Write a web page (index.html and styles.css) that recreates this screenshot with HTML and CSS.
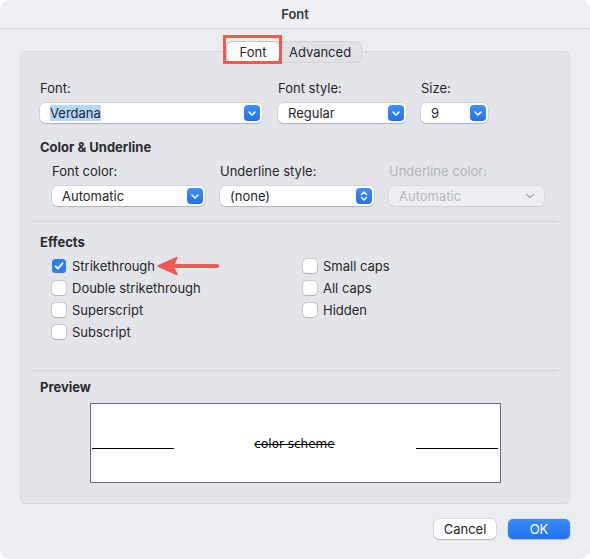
FILE: index.html
```html
<!DOCTYPE html>
<html lang="en">
<head>
    <meta charset="utf-8">
    <title>Font</title>
    <link rel="stylesheet" href="styles.css">
</head>
<body>
    <div class="window">
        <div class="titlebar">Font</div>

        <div class="tabs">
            <span class="tab active">Font</span>
            <span class="tab">Advanced</span>
        </div>

        <div class="group">
            <div class="row top-row">
                <div class="field w-font">
                    <label>Font:</label>
                    <div class="select">
                        <span class="value"><span class="hilite">Verdana</span></span>
                        <span class="btn"><svg width="16" height="16" viewBox="0 0 16 16"><path d="M5 7l3 3 3-3" fill="none" stroke="#fff" stroke-width="1.6" stroke-linecap="round" stroke-linejoin="round"/></svg></span>
                    </div>
                </div>
                <div class="field w-style">
                    <label>Font style:</label>
                    <div class="select">
                        <span class="value">Regular</span>
                        <span class="btn"><svg width="16" height="16" viewBox="0 0 16 16"><path d="M5 7l3 3 3-3" fill="none" stroke="#fff" stroke-width="1.6" stroke-linecap="round" stroke-linejoin="round"/></svg></span>
                    </div>
                </div>
                <div class="field w-size">
                    <label>Size:</label>
                    <div class="select">
                        <span class="value">9</span>
                        <span class="btn"><svg width="16" height="16" viewBox="0 0 16 16"><path d="M5 7l3 3 3-3" fill="none" stroke="#fff" stroke-width="1.6" stroke-linecap="round" stroke-linejoin="round"/></svg></span>
                    </div>
                </div>
            </div>

            <h3 class="heading h-color">Color &amp; Underline</h3>
            <div class="row sub-row">
                <div class="field w-third">
                    <label>Font color:</label>
                    <div class="select">
                        <span class="value">Automatic</span>
                        <span class="btn"><svg width="16" height="16" viewBox="0 0 16 16"><path d="M5 7l3 3 3-3" fill="none" stroke="#fff" stroke-width="1.6" stroke-linecap="round" stroke-linejoin="round"/></svg></span>
                    </div>
                </div>
                <div class="field w-third">
                    <label>Underline style:</label>
                    <div class="select">
                        <span class="value">(none)</span>
                        <span class="btn"><svg width="16" height="16" viewBox="0 0 16 16"><path d="M5.5 6.5L8 4l2.5 2.5M5.5 9.5L8 12l2.5-2.5" fill="none" stroke="#fff" stroke-width="1.5" stroke-linecap="round" stroke-linejoin="round"/></svg></span>
                    </div>
                </div>
                <div class="field w-third disabled">
                    <label>Underline color:</label>
                    <div class="select">
                        <span class="value">Automatic</span>
                        <span class="btn"><svg width="16" height="16" viewBox="0 0 16 16"><path d="M4.5 6.5L8 9.5l3.5-3" fill="none" stroke="#a8a8ad" stroke-width="1.3" stroke-linecap="round" stroke-linejoin="round"/></svg></span>
                    </div>
                </div>
            </div>

            <hr class="sep sep-1">

            <h3 class="heading h-effects">Effects</h3>
            <div class="effects">
                <div class="col">
                    <div class="check-row"><span class="box checked"><svg width="14" height="14" viewBox="0 0 14 14"><path d="M3.6 7.3l2.3 2.4 4.6-5.4" fill="none" stroke="#fff" stroke-width="1.8" stroke-linecap="round" stroke-linejoin="round"/></svg></span>Strikethrough</div>
                    <div class="check-row"><span class="box"></span>Double strikethrough</div>
                    <div class="check-row"><span class="box"></span>Superscript</div>
                    <div class="check-row"><span class="box"></span>Subscript</div>
                </div>
                <div class="col">
                    <div class="check-row"><span class="box"></span>Small caps</div>
                    <div class="check-row"><span class="box"></span>All caps</div>
                    <div class="check-row"><span class="box"></span>Hidden</div>
                </div>
                <!-- annotation arrow -->
                <svg class="arrow" width="66" height="22" viewBox="0 0 66 22">
                    <line x1="16" y1="11" x2="61" y2="11" stroke="#ee5a50" stroke-width="4" stroke-linecap="round"/>
                    <path d="M2 11L21 2.5L17 11L21 19.5Z" fill="#ee5a50" stroke="#ee5a50" stroke-width="1.5" stroke-linejoin="round"/>
                </svg>
            </div>

            <hr class="sep sep-2">

            <h3 class="heading h-preview">Preview</h3>
            <div class="preview">
                <span class="rule"></span>
                <span class="sample">color scheme</span>
                <span class="rule"></span>
            </div>
        </div>

        <div class="buttons">
            <button class="btn-push">Cancel</button>
            <button class="btn-push primary">OK</button>
        </div>
    </div>
</body>
</html>
```

FILE: styles.css
```css
body {
    margin: 0;
    background-color: #fff;
    font-family: Inter, "Liberation Sans", sans-serif;
    font-size: 13px;
    color: #262626;
}

.window {
    width: 590px;
    height: 559px;
    background-color: #ecedf1;
    border-radius: 10px;
    overflow: hidden;
}

.titlebar {
    height: 28px;
    line-height: 28px;
    text-align: center;
    font-weight: 600;
    color: #3b3b3d;
    background-color: #eef0f6;
    border-bottom: 1px solid #d3d4d9;
}

/* segmented tabs */
.tabs {
    position: relative;
    z-index: 1;
    display: flex;
    width: max-content;
    height: 20px;
    margin: 12px 0 0 225px;
    padding-left: 1px;
    background-color: #e1e2e7;
    border: 1px solid #d3d4d9;
    border-radius: 6px;
}

.tab {
    width: 82px;
    line-height: 20px;
    text-align: center;
    color: #262626;
}

.tab.active {
    position: relative;
    width: 52px;
    background-color: #fff;
    border-radius: 5px;
    box-shadow: 0 0 0 0.5px rgba(0,0,0,0.12), 0 1px 1.5px rgba(0,0,0,0.18);
}

/* red highlight drawn over the tab */
.tab.active::after {
    content: "";
    position: absolute;
    left: -4px;
    top: -7px;
    right: -3px;
    bottom: -2px;
    border: 3px solid #ef5b50;
}

/* group box */
.group {
    margin: -12px 20px 0;
    padding: 28px 11px 20px;
    background-color: #e4e5ea;
    border: 1px solid #d8d9de;
    border-radius: 6px;
}

.row {
    display: flex;
    padding-left: 8px;
}

.top-row .w-font { width: 222px; margin-right: 16px; }
.top-row .w-style { width: 128px; margin-right: 15px; }
.top-row .w-size { width: 67px; }

.sub-row {
    padding-left: 20px;
    margin-top: 8px;
}

.sub-row .w-third { width: 153px; margin-right: 15px; }
.sub-row .w-third:nth-child(2) { width: 154px; }
.sub-row .w-third:nth-child(3) { width: 155px; margin-right: 0; }

label {
    display: block;
    line-height: 16px;
}

.select {
    display: flex;
    align-items: center;
    justify-content: space-between;
    height: 20px;
    margin-top: 7px;
    padding: 0 2px 0 10px;
    background-color: #fff;
    border-radius: 5px;
    box-shadow: 0 0 0 0.5px rgba(0,0,0,0.14), 0 1px 1px rgba(0,0,0,0.16);
}

.value {
    line-height: 16px;
}

.hilite {
    background-color: #b3d7ff;
}

.select .btn {
    width: 16px;
    height: 16px;
    border-radius: 4px;
    background: linear-gradient(#3f90fa, #2170f2);
}

.select .btn svg {
    display: block;
}

.disabled label,
.disabled .value {
    color: #b5b5ba;
}

.disabled .select {
    background-color: #eeeff3;
    box-shadow: 0 0 0 0.5px rgba(0,0,0,0.08), 0 1px 1px rgba(0,0,0,0.06);
}

.disabled .select .btn {
    background: none;
    margin-right: 4px;
}

.heading {
    margin: 0;
    padding-left: 8px;
    font-size: 13px;
    font-weight: 700;
    line-height: 16px;
    color: #2b2b2d;
}

.h-color { margin-top: 16px; }
.h-effects { margin-top: 12px; }
.h-preview { margin-top: 8px; }

.sep {
    margin: 0;
    height: 1px;
    border: none;
    background-color: #d0d1d6;
}

.sep-1 { margin-top: 15px; }
.sep-2 { margin-top: 27px; }

/* checkboxes */
.effects {
    position: relative;
    display: grid;
    grid-template-columns: 251px 1fr;
    margin-top: 5px;
    padding-left: 20px;
}

.check-row {
    display: flex;
    align-items: center;
    height: 22px;
}

.box {
    width: 14px;
    height: 14px;
    margin-right: 6px;
    border-radius: 3.5px;
    background-color: #fff;
    box-shadow: 0 0 0 0.5px rgba(0,0,0,0.22), 0 0.5px 1px rgba(0,0,0,0.12);
}

.box.checked {
    background-color: #2e7cf6;
    box-shadow: none;
}

.box svg {
    display: block;
}

.arrow {
    position: absolute;
    left: 124px;
    top: 0;
}

/* preview */
.preview {
    display: flex;
    align-items: flex-start;
    justify-content: space-between;
    width: 406px;
    height: 45px;
    margin: 8px auto 0;
    padding: 33px 2px 0 1px;
    box-sizing: content-box;
    background-color: #fff;
    border: 1px solid #6e6e70;
}

.rule {
    width: 82px;
    height: 11px;
    border-bottom: 1px solid #000;
}

.sample {
    font-family: "DejaVu Sans", Verdana, sans-serif;
    font-size: 12px;
    line-height: 14px;
    color: #000;
    text-decoration: line-through;
}

/* buttons */
.buttons {
    display: flex;
    justify-content: flex-end;
    gap: 12px;
    margin: 15px 20px 0;
}

.btn-push {
    width: 62px;
    height: 20px;
    padding: 0;
    font-family: inherit;
    font-size: 13px;
    color: #262626;
    background-color: #fff;
    border: none;
    border-radius: 5px;
    box-shadow: 0 0 0 0.5px rgba(0,0,0,0.14), 0 1px 1px rgba(0,0,0,0.16);
}

.btn-push.primary {
    color: #fff;
    background: linear-gradient(#3a8bf9, #1f71f3);
}
```
